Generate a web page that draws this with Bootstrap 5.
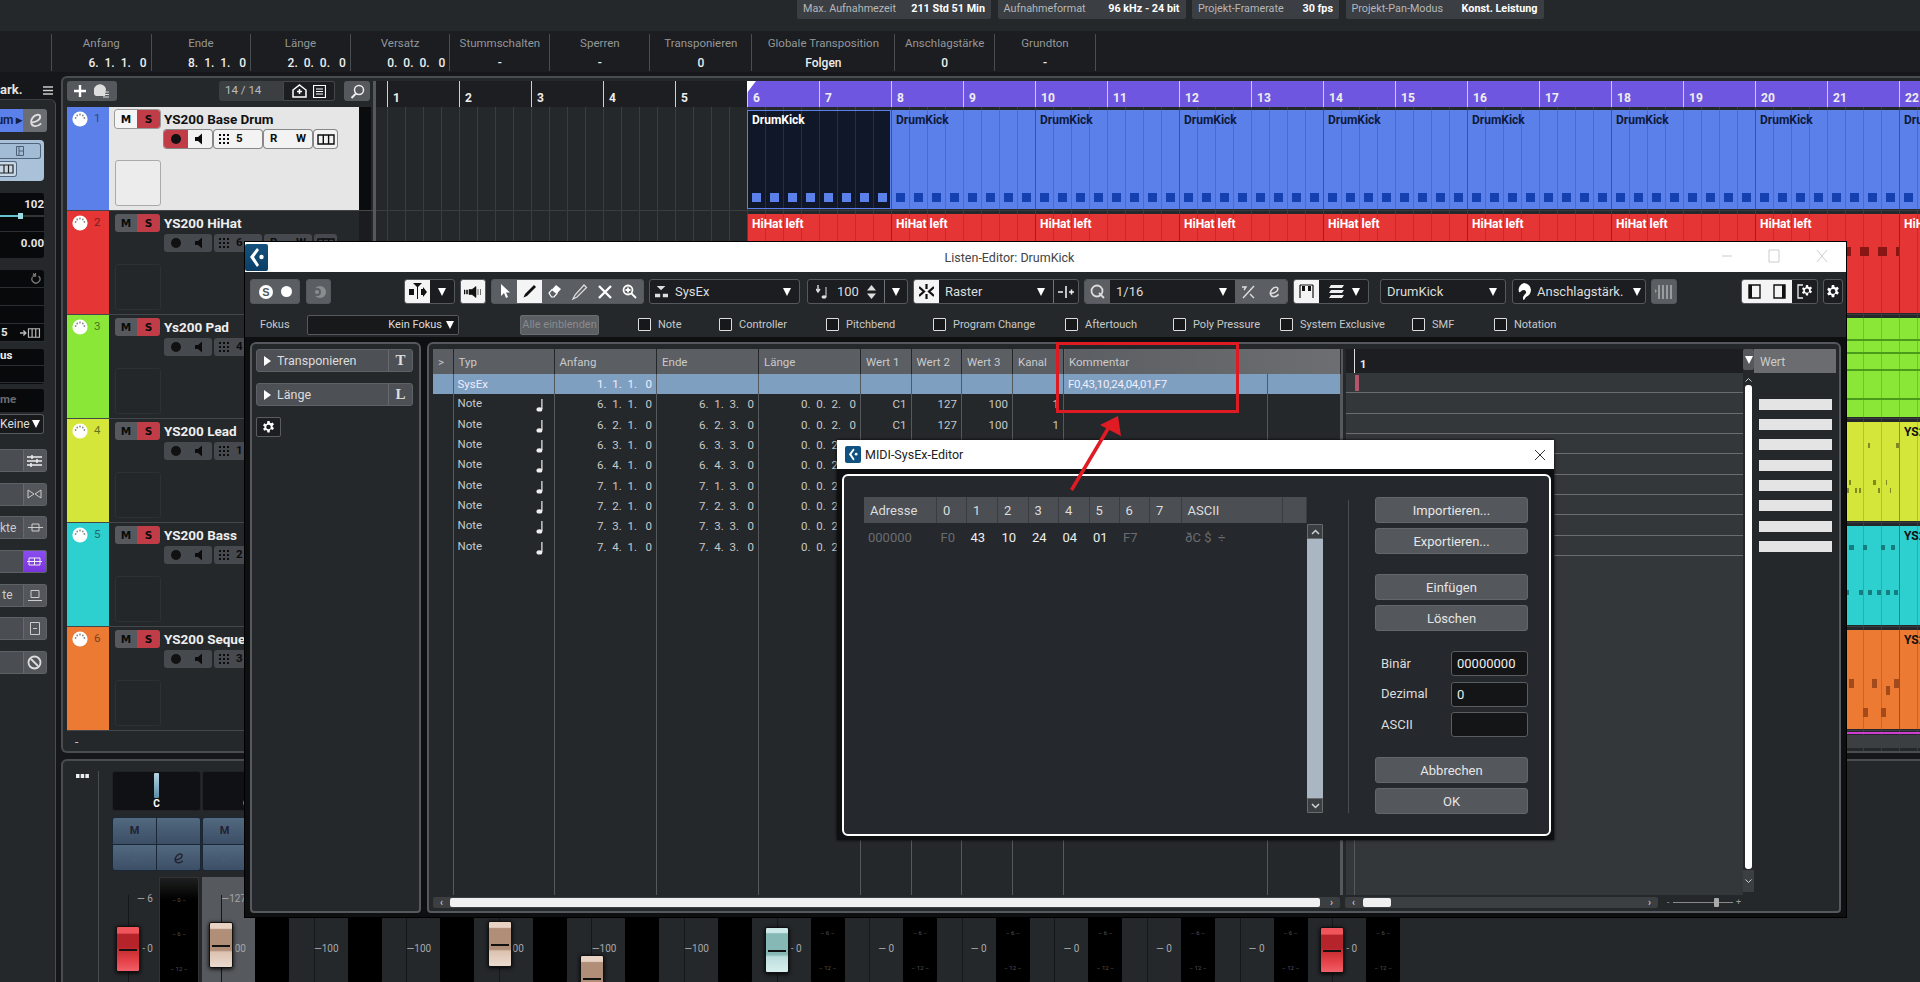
<!DOCTYPE html>
<html lang="de">
<head>
<meta charset="utf-8">
<title>Cubase Listen-Editor</title>
<link href="https://cdn.jsdelivr.net/npm/bootstrap@5.3.0/dist/css/bootstrap.min.css" rel="stylesheet">
<style>
:root{--pn:#25282b;--dk:#1b1d20;--ln:#55585c;--gr:#5b5e62;--tx:#c6c8ca}
html,body{margin:0;height:982px;overflow:hidden}
body{width:1920px;background:var(--pn);color:var(--tx);font:12px/1.2 Roboto,"Noto Sans",sans-serif;position:relative}
svg{display:block;flex:none}
.daw{width:1920px;height:982px}
.topbar{height:31px;background:#25282b;padding-left:797px;gap:6.5px}
.pill{height:19px;background:#3b3e42;border-radius:0 0 2px 2px;font-size:10.8px;color:#b5b7ba;padding:0 6px;white-space:nowrap}
.pill b{color:#fff;font-weight:700}
.p1{width:194px}.p2{width:188px}.p3{width:147px}.p4{width:198px}
.infoline{height:41px;background:#1b1d20;padding:3px 0 0 51px}
.icell{height:37px;border-left:1px solid #4a4d50;text-align:center;font-size:11.5px;color:#94979a;padding-top:3px;white-space:nowrap}
.icell b{display:block;color:#eee;font-size:12px;margin-top:5px;font-weight:500;white-space:pre}
.icell b.tv{text-align:right;padding-right:4px}
.icell:last-child{border-right:1px solid #4a4d50}
.w99{width:99.6px}.w102{width:102px}.w143{width:143px}.w100{width:100px}
.workspace{height:910px;background:#15171a;padding-top:4px}
.insp{width:61px;flex:none}
.insp-h{height:23px;padding:6px 8px 0 0;font-weight:700;font-size:13px;color:#e4e4e4}
.insp-p{width:55.5px;height:883px;background:var(--pn);border-right:1px solid #4a4d50;border-top:1px solid #3c3f42;border-top-right-radius:6px;padding-top:9px}
.i-route{width:47px;height:23px;border-radius:0 3px 3px 0;overflow:hidden;font-size:12px;font-weight:600;color:#12213f}
.i-route>span{width:23px;background:#5b80ea;white-space:nowrap;justify-content:flex-end;padding-right:1px}
.i-route>div{width:24px;background:#6a6d71;color:#ddd}
.i-blue{width:44px;height:41px;margin-top:8px;background:#a9c1d9;border-radius:0 4px 4px 0;padding-top:3px}
.i-bb{height:16px;width:41px;border:1px solid #51667c;border-left:0;border-radius:0 3px 3px 0;background:#a3bcd5}
.i-bb2{width:17px;margin-top:2px;background:#c9d8e6}
.i-blk{width:44px;background:#08090a;border-radius:0 3px 3px 0;font-weight:700;color:#e6e6e6;font-size:11.5px;text-align:right}
.b1{height:65px;margin-top:12px}.b1 i{display:block;height:1px;background:#2c2e31;margin-top:14px}
.b1 p{margin:0;padding-top:4px;line-height:14px}
.sl{height:2px;background:#333;margin-top:4px;position:relative}.sl::before{content:"";display:block;width:21px;height:2px;background:#65c3d0}
.sl::after{content:"";position:absolute;left:18px;top:-2px;width:5px;height:6px;background:#9fdce6}
.b2{height:72px;margin-top:12px}.b2>div{height:18px;border-bottom:1px solid #2c2e31;padding:0 3px}
.k5{width:17px;margin-right:3px;text-align:left;padding-left:1px}
.b3{height:35px;margin-top:7px}.b3>div{height:17px;border-bottom:1px solid #2c2e31;padding-right:32px;color:#eee}
.b4{height:23px;margin-top:5px;color:#6a6d70;padding:4px 28px 0 0;white-space:nowrap}
.keine{width:44px;height:20px;margin-top:2px;border:1px solid #55585c;border-left:0;border-radius:0 3px 3px 0;color:#ddd;font-size:12px;padding-right:3px;background:#17191b;white-space:nowrap}
.i-rows{margin-top:15px;gap:10.7px}
.i-row{width:47px;height:23px;background:#4a4d51;border:1px solid #5e6165;border-left:0;border-radius:0 3px 3px 0;color:#ccc;font-size:12px}
.i-row>span{width:23px;text-align:right;white-space:nowrap;padding-right:10px}
.i-row>div{width:24px;height:100%;border-left:1px solid #66696d;background:#53565a}
.i-row>div.pur{background:linear-gradient(#8a4df0,#7a35dc)}
.maincol{width:1859px;flex:none}
.proj{height:677px;background:var(--pn);border:2px solid #4a4d50;border-right:0;border-radius:6px 0 0 6px;padding:3px 0 0 4px}
.tcol{width:306px;flex:none}
.tt{height:26px;padding-bottom:6px}
.tg{height:20px;background:#55585c;border-radius:3px}
.tg1{width:50px}.tg2{width:116px;margin-left:102px;background:#3c3f42;color:#bbb;padding-left:6px;font-size:11.5px}
.tg2 .ico{background:#1c1e21;width:52px;margin-left:auto;height:100%;border:1px solid #44474a;border-radius:0 3px 3px 0;gap:6px}
.tg3{width:26px;margin-left:9px}
.trk{height:104px;border-bottom:1px solid #44474a}
.strip{width:42px;flex:none;padding:4px 0 0 5px;gap:6px}
.no{font-size:11.5px;line-height:15px;opacity:.55;color:#111}
.c1{background:#5b80ea}.c2{background:#e63535}.c3{background:#8ae637}.c4{background:#d4e63a}.c5{background:#2ecfcf}.c6{background:#ec7a33}
.tbody{width:250px;flex:none;padding:3px 0 0 6px}
.sel .tbody{background:#e6e6e6}
.rail{width:12px;background:#1a1c1f}.sel .rail{background:#0b0c0d}
.ms{width:45px;height:18px;border-radius:3px;overflow:hidden;flex:none;font-weight:700;font-size:10.5px;color:#0c0c0c;font-family:"DejaVu Sans",sans-serif;text-align:center;line-height:18px}
.ms span{width:22px}.ms .m{background:#56595d}.ms .s{width:23px;background:#c03c47}
.sel .ms{box-shadow:0 0 0 1px #9a9a9a}.sel .ms .m{background:#f5f5f5}
.tname{font-weight:700;font-size:13.5px;color:#eee;margin-left:4px;white-space:nowrap}
.sel .tname{color:#111}
.r2{margin:2px 0 0 49px;gap:2px;height:18px}
.r2>div{height:18px;background:#46494d;border-radius:3px;color:#0c0c0c;font-weight:700;font-size:11.5px}
.sel .r2>div{background:#f3f3f3;box-shadow:0 0 0 1px #888}
.r-a{width:48px;overflow:hidden}.r-a span{width:24px;height:100%}
.sel .r-a span:first-child{background:#c03c47}
.r-b{width:48px;padding:0 5px;gap:6px}.r-c{width:48px;padding:0 6px;justify-content:space-between}.r-d{width:23px}
.thumb{width:46px;height:46px;margin-top:12px;border:1px solid #2e3134;border-radius:3px;background:#24272a}
.sel .thumb{background:#ececec;border-color:#aaa}
.split{width:3px;flex:none;background:#55585c}
.arr{width:1545px;flex:none;overflow:hidden;background:repeating-linear-gradient(90deg,#3a3d40 0 1px,transparent 1px 18px) 11px 0 #25282b}
.ruler{height:26px;background:#1c1e21;padding-left:11px}
.bar{width:72px;flex:none;border-left:1px solid #cfcfcf;color:#eee;font-weight:700;font-size:12px;padding:10px 0 0 5px;height:26px}
.bar.pu{background:#6f56e0;position:relative}
.flag{position:absolute;left:-1px;top:0;width:0;height:0;border-top:12px solid #fff;border-right:9px solid transparent}
.lane{height:104px;padding:3px 0 2px 371px;border-bottom:1px solid #3a3d40}
.ev{height:99px;width:144px;flex:none;font-weight:700;font-size:12px;padding:3px 4px;border-left:1px solid rgba(0,0,0,.35);white-space:nowrap;overflow:hidden;position:relative;background-image:repeating-linear-gradient(90deg,transparent 0 17px,rgba(0,0,0,.16) 17px 18px)}
.e1{color:#0d1a3a;background-color:#5b80ea}
.e1s{color:#fff;background-color:#0f1729;outline:1px solid #5b80ea;outline-offset:-1px;background-image:repeating-linear-gradient(90deg,transparent 0 17px,rgba(255,255,255,.1) 17px 18px)}
.e2{color:#fff;background-color:#e63535}
.e3{color:#111;background-color:#8ae637;width:1174px}
.e4{color:#111;background-color:#d4e63a;width:1152px}.e4b{color:#111;background-color:#d4e63a;width:144px}
.e5{color:#111;background-color:#2ecfcf;width:1152px}.e5b{color:#111;background-color:#2ecfcf;width:144px}
.e6{color:#111;background-color:#ec7a33;width:1152px}.e6b{color:#111;background-color:#ec7a33;width:144px}
.nts{position:absolute;left:0;right:0;top:83px;height:9px;background:repeating-linear-gradient(90deg,transparent 0 4px,#1540b0 4px 13px,transparent 13px 18px)}
.e1s .nts{background:repeating-linear-gradient(90deg,transparent 0 4px,#5b80ea 4px 13px,transparent 13px 18px)}
.redn{position:absolute;right:0;width:75px;top:33px;height:9px;background:repeating-linear-gradient(90deg,#8a1515 0 9px,transparent 9px 18px)}
.evsvg{position:absolute;right:0;top:0}
.lane-end{padding-left:371px}
.mag{height:2px;background:#d03ccf;margin-top:1px}
.gr13{height:13px;margin-top:1px;background:#3c3f42}
.mix{height:223px;margin-top:6px;background:var(--pn);border:2px solid #4a4d50;border-width:2px 0 0 2px;border-top-left-radius:6px}
.mrail{width:36px;flex:none;border-right:1px solid #4a4d50;margin-top:10px;padding-top:3px;padding-left:13px;color:#eee}
.mspace{width:13px;flex:none}
.ch{width:92.6px;flex:none}
.c-first{width:90px}
.top{height:116px;padding-top:10px}
.pan{height:40px;width:89px;background:#101114;border-radius:3px;border:1px solid #222;color:#fff;font-weight:700;font-size:10px;text-align:center;padding-top:1px}
.pan i{display:block;width:5px;height:25px;margin:0 auto 0;background:linear-gradient(#b8d4e4,#5b8ba6);border-radius:1px}
.mle{width:89px;height:54px;margin-top:6px;border-radius:3px;overflow:hidden;border:1px solid #1c2734;display:grid;grid-template-columns:1fr 1fr;gap:1px;background:#1c2734;color:#223;font-weight:700;font-size:11px;text-align:center;line-height:26px}
.mle div{background:linear-gradient(#526980,#3b4e65)}
.mle .dim{color:#4a5c72}
.low{height:105px}
.fz{width:53px;flex:none;position:relative;background:linear-gradient(#15171a,#15171a) no-repeat 19px 18px/1px 100%;font-size:10px;color:#a5a7aa;text-align:right;padding-right:9px}
.c-first .fz{width:47px;background-position:16px 18px;padding-right:6px}
.fz-lt{background-color:#56595d}
.fz span{display:block;line-height:12px}
.l1{margin-top:16px}.l2{margin-top:38px}.l3{margin-top:66px}
.mt{width:34px;flex:none;background:#000;font-size:6px;color:#555;text-align:center;border-radius:1px;white-space:pre}
.c-first .mt{width:40px;margin-right:3px;background:linear-gradient(#1e1f20,#000 22px);border:1px solid #333;border-bottom:0}
.mt span{display:block;line-height:8px}
.mt .k1{margin-top:52px}.mt .k2{margin-top:27px}
.c-first .mt .k0{margin-top:18px;margin-bottom:-26px}
.fader{position:absolute;width:24px;height:46px;border-radius:2px;box-shadow:0 1px 4px #000;border:1px solid #111}
.fader::after{content:"";position:absolute;left:2px;right:2px;top:50%;height:2px;background:#111}
.f-r{background:linear-gradient(#f0555c 0 14%,#b5242a 16% 46%,#c42c30 50%,#e8454c 80%,#f0606a)}
.f-b{background:linear-gradient(#e8d2c4 0 12%,#b08e78 15% 62%,#dcc2b0 66%,#eadbd0)}
.f-t{background:linear-gradient(#cdeae8 0 10%,#86b8b6 13% 60%,#bcdedd 66%,#d8efee)}
.fa1{left:4px;top:49px}.fa2{left:7px;top:45px}.fa3{left:8px;top:44px}.fa4{left:8px;top:78px}.fa5{left:7px;top:50px}
.win{position:absolute;left:245px;top:242px;width:1601px;height:675px;background:var(--pn);box-shadow:0 0 0 1px #000}
.wt{height:30px;background:#fff;color:#444;font-size:12.5px;position:relative;padding-right:72px}
.wic{position:absolute;left:0;top:2px;width:23px;height:27px;background:linear-gradient(#13527e,#0b3f66);border-radius:2px}
.wbtn{position:absolute;top:7px;color:#bbb}
.wb-min{left:1476px}.wb-max{left:1523px}.wb-cls{left:1571px}
.tb{height:25px;margin-top:7px;padding-left:5px}
.sg{height:25px;border:1px solid #55585c;border-radius:3px;overflow:hidden;background:#1b1d20;color:#ddd;font-size:13px;flex:none}
.sg>div{height:100%}
.cw{background:#f4f4f4}.cg{background:#5b5e62}
.sg.gy{background:#5b5e62}
.w20{width:20px}.w25{width:25px}.w26{width:26px}.w50{width:50px}.w51{width:51px}.w52{width:52px}.w153{width:153px}.w151{width:151px}.w101{width:101px}.w166{width:166px}.w204{width:204px}.w76{width:76px}.w126{width:126px}.w134{width:134px}.w77{width:77px}
.m5{margin-left:5px}.m6{margin-left:6px}.m7{margin-left:7px}.m11{margin-left:11px}.m64{margin-left:64px}.m73{margin-left:73px}
.cell{width:25px;flex:none}
.lbl{padding-left:6px;white-space:nowrap}
.sy-i{margin-left:5px}.sy-t{margin-left:7px}
.tri{width:0;height:0;border-left:4.5px solid transparent;border-right:4.5px solid transparent;border-top:8px solid #fff;flex:none}
.fokrow{height:23px;margin-top:9px;padding-left:15px;font-size:11px}
.fok{width:47px;flex:none}
.fdd{width:152px;height:20px;border:1px solid #55585c;border-radius:2px;background:#17191b;padding-right:4px;gap:4px;color:#ddd}
.alle{width:79px;height:20px;margin-left:61px;background:#5b5e62;border:1px solid #6a6d70;border-radius:2px;color:#888b8e;padding:0;font-size:11px;line-height:1}
.cks{display:grid;grid-template-columns:81px 107px 107px 132px 108px 107px 132px 82px auto;margin-left:39px}
.form-check-input.ck{width:13px;height:13px;margin:0 7px 0 0;border:1px solid #dcdcdc;border-radius:1px;background-color:#16181a;flex:none}
.blk{height:5px;background:#0e0f11;margin-top:1px}
.wbody{height:575px;background:#0e0f11;padding:0 5px;gap:6px}
.pnl{background:var(--pn);border:2px solid #55585c;border-radius:6px 6px 4px 4px;height:571px}
.left{width:171px;padding:5px 6px 0 4px}
.xp{height:23px;background:#4d5054;border:1px solid #5e6165;border-radius:3px;color:#ddd;font-size:12.5px;margin-bottom:11px;padding-left:7px;gap:6px}
.xp .tr{width:0;height:0;border-top:5px solid transparent;border-bottom:5px solid transparent;border-left:7px solid #fff}
.xp em{margin-left:auto;width:24px;height:100%;border-left:1px solid #66696d;font:700 15px "Liberation Serif",serif;text-align:center;line-height:21px;color:#ddd}
.gbtn{width:25px;height:20px;background:#1c1e21;border:1px solid #5a5d60;border-radius:2px}
.main{width:1414px;padding:5px 4px 0 4px}
.up{height:546px}
.evw{width:907px;flex:none;height:546px}
table.evt{width:907px;height:546px;table-layout:fixed;border-collapse:collapse;margin:0;--bs-table-bg:transparent;--bs-table-color:var(--tx);font-size:11.5px}
.evt col:nth-child(1){width:20px}.evt col:nth-child(2){width:101px}.evt col:nth-child(3){width:102.5px}.evt col:nth-child(4),.evt col:nth-child(5){width:102px}.evt col:nth-child(6),.evt col:nth-child(7){width:50.5px}.evt col:nth-child(8),.evt col:nth-child(9){width:51px}.evt col:nth-child(10){width:204px}.evt col:nth-child(11){width:73px}
table.evt>:not(caption)>*>*{padding:2px 4px 0;border:0;border-right:1px solid #55585c;background:transparent;color:var(--tx);height:20px;vertical-align:middle;white-space:pre;line-height:1}
table.evt>thead>tr>th{height:25px;background:#5b5e62;border-right:1px solid #25282b;font-weight:400;color:#c9cbcd;font-size:11.5px;padding:2px 5px 0}
table.evt>thead>tr>th.kom{background:linear-gradient(90deg,#5b5e62,#6c6e71)}
table.evt>tbody>tr.s>td{background:#7f9fc0;color:#eef;height:20px}
table.evt>tbody>tr:nth-child(3n)>td{height:21px}
table.evt td.r{text-align:right}
table.evt td.kt{letter-spacing:-.25px}
table.evt>tbody>tr.fill>td{height:338px}
.nt{display:inline-block;vertical-align:-2px;float:right;margin-right:6px}
.divi{width:6px;flex:none;background:linear-gradient(90deg,transparent 1px,#55585c 1px 3px,transparent 3px)}
.nd{width:397px;flex:none;background:#34373a}
.nd-r{height:24px;background:#1c1e21;padding-left:8px}
.nd-r b{display:block;border-left:1px solid #ddd;padding:9px 0 0 5px;height:24px;color:#eee;font-size:11px;line-height:1.2}
.nd-b{height:522px;position:relative;background:repeating-linear-gradient(#34373a 0 19.33px,#6a6d70 19.33px 20.33px) 0 0/100% 184px no-repeat,linear-gradient(#54575b,#54575b) no-repeat 8px 0/1px 100% #34373a}
.pink{position:absolute;left:9px;top:2px;width:4px;height:16px;background:#b3566b}
.vs{width:11px;flex:none;height:546px;background:#25282b}
.vs .tg4{height:21px;background:#55585c;border-radius:2px;margin-bottom:4px}
.vs .ar{height:10px;color:#bbb}
.vs .th{width:7px;margin:1px auto 0;height:484px;background:#fff;border-radius:3px}
.vs .bt{height:22px;background:#3c3f42;margin-top:1px}
.wert{width:82px;flex:none}
.wert .hd{height:24px;background:#6a6c6f;color:#ccc;padding:6px 6px 0}
.wb{height:11px;width:73px;margin:9.33px 0 0 5px;background:#e4e4e4}
.hd+.wb{margin-top:25.7px}
.bots{height:11px;margin-top:2px}
.hs{height:11px;background:#3c3f42;border-radius:2px;color:#ddd}
.hs1{width:907px}.hs2{width:313px;margin-left:5px}
.hs i{display:block;height:9px;background:#f0f0f0;border-radius:2px}
.hs1 i{width:870px;margin-left:17px}
.hs2 i{width:28px;margin-left:18px}
.hs u{width:9px;text-align:center;text-decoration:none;font-size:10px;line-height:11px}
.zm{width:74px;margin-left:9px;color:#999;font-size:9px;gap:3px;line-height:11px}
.zm hr{flex:3;margin:0;border:0;height:1px;background:#888;opacity:1}
.zm hr+em+hr{flex:1}
.zm em{width:5px;height:9px;margin-top:1px;background:#aaa;border-radius:1px;margin-left:-3px;margin-right:-3px;flex:none}
.rbox{position:absolute;left:1056px;top:342px;width:183px;height:71px;border:3px solid #de1a22}
.sx{position:absolute;left:837px;top:440px;width:717px;height:400px;background:#0e0f11;box-shadow:0 0 3px #000}
.sxt{height:29px;background:#fff;color:#222;font-size:12.5px;padding-left:28px;position:relative}
.sxic{position:absolute;left:8px;top:6px;width:16px;height:17px;background:#0f5281;border-radius:2px}
.sxb{margin:5px 3px 0 5px;height:362px;background:#25282c;border:2px solid #fff;border-radius:6px;padding:21px 0 0 20px}
table.sxtb{width:443px;table-layout:fixed;border-collapse:collapse;margin:0;font-size:13px;--bs-table-bg:transparent}
.sxtb col:nth-child(1){width:72.5px}.sxtb col:nth-child(2){width:30px}.sxtb col:nth-child(3){width:31px}.sxtb col:nth-child(4),.sxtb col:nth-child(5),.sxtb col:nth-child(6){width:30.5px}.sxtb col:nth-child(7){width:30px}.sxtb col:nth-child(8){width:30.5px}.sxtb col:nth-child(9){width:31.5px}.sxtb col:nth-child(10){width:101.5px}.sxtb col:nth-child(11){width:24px}
table.sxtb>:not(caption)>*>*{padding:0 0 0 6px;border:0;background:transparent;color:#eee;height:28px;vertical-align:middle;line-height:1}
table.sxtb>thead>tr>th{height:26px;background:#4b4e52;border-right:1px solid #3a3d40;font-weight:400;color:#ddd;font-size:13px}
table.sxtb td.d{color:#6a6d70}
table.sxtb td.c{padding-left:4px}
.sbar{width:16px;flex:none;height:289px;margin-top:27px;background:#aab6c2;border-radius:2px;overflow:hidden}
.sbar div{height:15px;background:#3c3f42;border:1px solid #6a6d70;color:#cfd3d6}
.sep{width:1px;height:313px;background:#4a4d50;margin:3px 26px 0 25px;flex:none}
.sxr{width:153px;flex:none}
.btn.sb{width:100%;height:26px;padding:0;background:#54575b;border:1px solid #63666a;border-radius:3px;color:#e6e6e6;font-size:13px;line-height:1;display:block;margin-bottom:5px;box-shadow:none}
.btn.sp21{margin-bottom:20px}
.fr{height:25px;margin-bottom:5.7px;font-size:13px;color:#ddd;padding-left:6px}
.fr.fr-last{margin-bottom:20px}
.fr .form-control{margin-left:auto;width:77px;height:25px;padding:0 5px;background:#141517;border:1px solid #5a5d60;border-radius:3px;color:#eee;font:13px Roboto,sans-serif;min-height:0}
.arrow{position:absolute;left:1060px;top:410px}
</style>
</head>
<body>
<svg width="0" height="0" class="position-absolute">
<defs>
<symbol id="midi" viewBox="0 0 16 16"><circle cx="8" cy="8" r="7.6" fill="#fff"/><g fill="#8a8d90"><circle cx="3.6" cy="7" r=".9"/><circle cx="5.2" cy="4.5" r=".9"/><circle cx="8" cy="3.5" r=".9"/><circle cx="10.8" cy="4.5" r=".9"/><circle cx="12.4" cy="7" r=".9"/></g></symbol>
<symbol id="nt" viewBox="0 0 8 14"><ellipse cx="3.4" cy="11.4" rx="2.9" ry="2.2" fill="#eee"/><rect x="5.3" y="1" width="1.2" height="10" fill="#eee"/></symbol>
<symbol id="spk" viewBox="0 0 12 12"><path d="M1 4h3l4-3.5v11L4 8H1z" fill="currentColor"/></symbol>
<symbol id="gd" viewBox="0 0 11 11"><g fill="currentColor"><rect x="0" y="0" width="2" height="2"/><rect x="4" y="0" width="2" height="2"/><rect x="8" y="0" width="2" height="2"/><rect x="0" y="4" width="2" height="2"/><rect x="4" y="4" width="2" height="2"/><rect x="8" y="4" width="2" height="2"/><rect x="0" y="8" width="2" height="2"/><rect x="4" y="8" width="2" height="2"/><rect x="8" y="8" width="2" height="2"/></g></symbol>
<symbol id="kb" viewBox="0 0 18 11"><path d="M1 1h16v9H1zM6.300 1v9M11.600 1v9" fill="none" stroke="currentColor" stroke-width="1.400"/></symbol>
<symbol id="gear" viewBox="0 0 16 16"><path fill="#fff" fill-rule="evenodd" d="M6.600 0h2.800l.4 2.200 1.400.7 2-1 1.500 2.500-1.700 1.400v1.400l1.700 1.400-1.500 2.500-2-1-1.400.7L9.400 14H6.600l-.4-2.200-1.400-.7-2 1L1.300 9.600 3 8.200V6.800L1.300 5.400l1.500-2.500 2 1 1.400-.7zM8 4.700A2.800 2.800 0 1 0 8 10.300 2.800 2.800 0 0 0 8 4.700z"/></symbol>
<symbol id="cube" viewBox="0 0 23 27"><path d="M12 4 5 13l7 10 2-2-5-8 5-7z" fill="#fff"/><circle cx="16.500" cy="13" r="2.200" fill="#fff"/></symbol>
<symbol id="e" viewBox="0 0 18 18"><path d="M4 11c4 0 10-2 10-6 0-3-5-3-8 1-3 4-2 9 3 9 2 0 4-1 6-3" fill="none" stroke="currentColor" stroke-width="2"/></symbol>
</defs>
</svg>

<div class="daw d-flex flex-column">
  <header class="topbar d-flex">
    <div class="pill p1 d-flex justify-content-between align-items-center"><span>Max. Aufnahmezeit</span><b>211 Std 51 Min</b></div>
    <div class="pill p2 d-flex justify-content-between align-items-center"><span>Aufnahmeformat</span><b>96 kHz - 24 bit</b></div>
    <div class="pill p3 d-flex justify-content-between align-items-center"><span>Projekt-Framerate</span><b>30 fps</b></div>
    <div class="pill p4 d-flex justify-content-between align-items-center"><span>Projekt-Pan-Modus</span><b>Konst. Leistung</b></div>
  </header>
  <div class="infoline d-flex">
    <div class="icell w99">Anfang<b class="tv">6.  1.  1.   0</b></div>
    <div class="icell w99">Ende<b class="tv">8.  1.  1.   0</b></div>
    <div class="icell w99">Länge<b class="tv">2.  0.  0.   0</b></div>
    <div class="icell w99">Versatz<b class="tv">0.  0.  0.   0</b></div>
    <div class="icell w100">Stummschalten<b>-</b></div>
    <div class="icell w100">Sperren<b>-</b></div>
    <div class="icell w102">Transponieren<b>0</b></div>
    <div class="icell w143">Globale Transposition<b>Folgen</b></div>
    <div class="icell w99">Anschlagstärke<b>0</b></div>
    <div class="icell w102">Grundton<b>-</b></div>
  </div>
  <div class="workspace d-flex">
    <aside class="insp">
      <div class="insp-h d-flex justify-content-between"><span>ark.</span><svg width="10" height="9" class="mt-1"><path d="M0 1h10M0 4.500h10M0 8h10" stroke="#ccc" stroke-width="1.500"/></svg></div>
      <div class="insp-p">
        <div class="i-route d-flex"><span class="d-flex align-items-center">um&thinsp;▸</span><div class="d-flex align-items-center justify-content-center"><svg width="17" height="17"><use href="#e"/></svg></div></div>
        <div class="i-blue">
          <div class="i-bb d-flex align-items-center justify-content-end pe-3"><svg width="8" height="10"><path d="M.5.5h7v9h-7zM3 .5v9M3 5h4.500" fill="none" stroke="#4c6076"/></svg></div>
          <div class="i-bb i-bb2 d-flex align-items-center"><svg width="14" height="10"><path d="M0 1h13v8H0M4 1v8M8.500 1v8" fill="none" stroke="#222" stroke-width="1.200"/></svg></div>
        </div>
        <div class="i-blk b1"><p>102</p><div class="sl"></div><i></i><p>0.00</p></div>
        <div class="i-blk b2">
          <div class="d-flex justify-content-end align-items-center"><svg width="11" height="13"><path d="M8.500 4a4 4 0 1 1-6 1M3 1.500l2.500 2.500M5.500 1v3h-3" fill="none" stroke="#777" stroke-width="1.300"/></svg></div>
          <div></div><div></div>
          <div class="d-flex align-items-center p-0"><span class="k5">5</span><svg width="22" height="12" viewBox="0 0 26 12"><path d="M0 6h6M4 3l3 3-3 3" fill="none" stroke="#bbb" stroke-width="1.500"/><path d="M10 1h13v10H10zM14.300 1v10M18.600 1v10" fill="none" stroke="#bbb" stroke-width="1.400"/></svg></div>
        </div>
        <div class="i-blk b3"><div>us</div><div></div></div>
        <div class="i-blk b4">me</div>
        <div class="keine d-flex align-items-center justify-content-between">Keine<span class="tri"></span></div>
        <div class="i-rows d-flex flex-column">
          <div class="i-row d-flex align-items-center"><span></span><div class="d-flex align-items-center justify-content-center"><svg width="15" height="12"><path d="M0 2h15M0 6h15M0 10h15M5 0v4M10 4v4M4 8v4" stroke="#eee" stroke-width="1.500"/></svg></div></div>
          <div class="i-row d-flex align-items-center"><span></span><div class="d-flex align-items-center justify-content-center"><svg width="15" height="10"><path d="M1 1l6 4-6 4zM14 1L8 5l6 4z" fill="none" stroke="#ccc"/></svg></div></div>
          <div class="i-row d-flex align-items-center"><span>kte</span><div class="d-flex align-items-center justify-content-center"><svg width="15" height="9"><path d="M4 1h7v7H4zM0 4.500h15" fill="none" stroke="#ccc"/></svg></div></div>
          <div class="i-row d-flex align-items-center"><span></span><div class="pur d-flex align-items-center justify-content-center"><svg width="15" height="9"><path d="M2 1h11v7H2zM0 4.500h15M7.500 1v7" fill="none" stroke="#eee"/></svg></div></div>
          <div class="i-row d-flex align-items-center"><span>te</span><div class="d-flex align-items-center justify-content-center"><svg width="14" height="11"><path d="M3 .5h8v7H3zM0 10.500h14" fill="none" stroke="#ccc"/></svg></div></div>
          <div class="i-row d-flex align-items-center"><span></span><div class="d-flex align-items-center justify-content-center"><svg width="10" height="13"><path d="M.5.5h9v12h-9zM3 6.500h4" fill="none" stroke="#ccc"/></svg></div></div>
          <div class="i-row d-flex align-items-center"><span></span><div class="d-flex align-items-center justify-content-center"><svg width="15" height="15"><circle cx="7.500" cy="7.500" r="6" fill="none" stroke="#ddd" stroke-width="1.800"/><path d="M4 4l7 7" stroke="#ddd" stroke-width="1.800"/></svg></div></div>
        </div>
      </div>
    </aside>
    <div class="maincol">
      <section class="proj d-flex">
        <div class="tcol">
          <div class="tt d-flex">
            <div class="tg tg1 d-flex align-items-center justify-content-center gap-2"><svg width="12" height="12"><path d="M6 0v12M0 6h12" stroke="#fff" stroke-width="2.400"/></svg><svg width="16" height="14"><path d="M0 8a6 6 0 0 1 12-3l-1 7H3a3 3 0 0 1-3-4z" fill="#ddd"/><path d="M9 8h6M9 10.500h6M9 13h6" stroke="#ddd"/></svg></div>
            <div class="tg tg2 d-flex align-items-center"><span>14 / 14</span><div class="ico d-flex align-items-center justify-content-center"><svg width="15" height="14"><path d="M7.500 1 14 6v7H1V6z" fill="none" stroke="#fff" stroke-width="1.500"/><path d="M7.500 5v5M5 7.500h5" stroke="#fff" stroke-width="1.500"/></svg><svg width="13" height="13"><path d="M.5.500h12v12H.5zM3 4h7M3 6.500h7M3 9h7" fill="none" stroke="#fff" stroke-width="1.200"/></svg></div></div>
            <div class="tg tg3 d-flex align-items-center justify-content-center"><svg width="15" height="15"><circle cx="9" cy="6" r="4.500" fill="none" stroke="#eee" stroke-width="1.500"/><path d="M6 9.500 1.500 14" stroke="#eee" stroke-width="2"/></svg></div>
          </div>
          <div class="trk sel d-flex"><div class="strip c1 d-flex"><svg width="16" height="16"><use href="#midi"/></svg><span class="no">1</span></div><div class="tbody"><div class="d-flex align-items-center"><div class="ms d-flex"><span class="m">M</span><span class="s">S</span></div><span class="tname">YS200 Base Drum</span></div><div class="r2 d-flex"><div class="r-a d-flex"><span class="d-flex align-items-center justify-content-center"><svg width="10" height="10"><circle cx="5" cy="5" r="5" fill="#111"/></svg></span><span class="d-flex align-items-center justify-content-center"><svg width="12" height="12"><use href="#spk"/></svg></span></div><div class="r-b d-flex align-items-center"><svg width="11" height="11"><use href="#gd"/></svg><span>5</span></div><div class="r-c d-flex align-items-center"><span>R</span><span>W</span></div><div class="r-d d-flex align-items-center justify-content-center"><svg width="18" height="11"><use href="#kb"/></svg></div></div><div class="thumb"></div></div><div class="rail"></div></div>
          <div class="trk d-flex"><div class="strip c2 d-flex"><svg width="16" height="16"><use href="#midi"/></svg><span class="no">2</span></div><div class="tbody"><div class="d-flex align-items-center"><div class="ms d-flex"><span class="m">M</span><span class="s">S</span></div><span class="tname">YS200 HiHat</span></div><div class="r2 d-flex"><div class="r-a d-flex"><span class="d-flex align-items-center justify-content-center"><svg width="10" height="10"><circle cx="5" cy="5" r="5" fill="#111"/></svg></span><span class="d-flex align-items-center justify-content-center"><svg width="12" height="12"><use href="#spk"/></svg></span></div><div class="r-b d-flex align-items-center"><svg width="11" height="11"><use href="#gd"/></svg><span>6</span></div><div class="r-c d-flex align-items-center"><span>R</span><span>W</span></div><div class="r-d d-flex align-items-center justify-content-center"><svg width="18" height="11"><use href="#kb"/></svg></div></div><div class="thumb"></div></div><div class="rail"></div></div>
          <div class="trk d-flex"><div class="strip c3 d-flex"><svg width="16" height="16"><use href="#midi"/></svg><span class="no">3</span></div><div class="tbody"><div class="d-flex align-items-center"><div class="ms d-flex"><span class="m">M</span><span class="s">S</span></div><span class="tname">Ys200 Pad</span></div><div class="r2 d-flex"><div class="r-a d-flex"><span class="d-flex align-items-center justify-content-center"><svg width="10" height="10"><circle cx="5" cy="5" r="5" fill="#111"/></svg></span><span class="d-flex align-items-center justify-content-center"><svg width="12" height="12"><use href="#spk"/></svg></span></div><div class="r-b d-flex align-items-center"><svg width="11" height="11"><use href="#gd"/></svg><span>4</span></div></div><div class="thumb"></div></div><div class="rail"></div></div>
          <div class="trk d-flex"><div class="strip c4 d-flex"><svg width="16" height="16"><use href="#midi"/></svg><span class="no">4</span></div><div class="tbody"><div class="d-flex align-items-center"><div class="ms d-flex"><span class="m">M</span><span class="s">S</span></div><span class="tname">YS200 Lead</span></div><div class="r2 d-flex"><div class="r-a d-flex"><span class="d-flex align-items-center justify-content-center"><svg width="10" height="10"><circle cx="5" cy="5" r="5" fill="#111"/></svg></span><span class="d-flex align-items-center justify-content-center"><svg width="12" height="12"><use href="#spk"/></svg></span></div><div class="r-b d-flex align-items-center"><svg width="11" height="11"><use href="#gd"/></svg><span>1</span></div></div><div class="thumb"></div></div><div class="rail"></div></div>
          <div class="trk d-flex"><div class="strip c5 d-flex"><svg width="16" height="16"><use href="#midi"/></svg><span class="no">5</span></div><div class="tbody"><div class="d-flex align-items-center"><div class="ms d-flex"><span class="m">M</span><span class="s">S</span></div><span class="tname">YS200 Bass</span></div><div class="r2 d-flex"><div class="r-a d-flex"><span class="d-flex align-items-center justify-content-center"><svg width="10" height="10"><circle cx="5" cy="5" r="5" fill="#111"/></svg></span><span class="d-flex align-items-center justify-content-center"><svg width="12" height="12"><use href="#spk"/></svg></span></div><div class="r-b d-flex align-items-center"><svg width="11" height="11"><use href="#gd"/></svg><span>2</span></div></div><div class="thumb"></div></div><div class="rail"></div></div>
          <div class="trk d-flex"><div class="strip c6 d-flex"><svg width="16" height="16"><use href="#midi"/></svg><span class="no">6</span></div><div class="tbody"><div class="d-flex align-items-center"><div class="ms d-flex"><span class="m">M</span><span class="s">S</span></div><span class="tname">YS200 Sequencer</span></div><div class="r2 d-flex"><div class="r-a d-flex"><span class="d-flex align-items-center justify-content-center"><svg width="10" height="10"><circle cx="5" cy="5" r="5" fill="#111"/></svg></span><span class="d-flex align-items-center justify-content-center"><svg width="12" height="12"><use href="#spk"/></svg></span></div><div class="r-b d-flex align-items-center"><svg width="11" height="11"><use href="#gd"/></svg><span>3</span></div></div><div class="thumb"></div></div><div class="rail"></div></div>
          <div class="ps-2 pt-1">-</div>
        </div>
        <div class="split"></div>
        <div class="arr">
          <div class="ruler d-flex">
            <div class="bar">1</div><div class="bar">2</div><div class="bar">3</div><div class="bar">4</div><div class="bar">5</div>
            <div class="bar pu"><span class="flag"></span>6</div><div class="bar pu">7</div><div class="bar pu">8</div><div class="bar pu">9</div><div class="bar pu">10</div><div class="bar pu">11</div><div class="bar pu">12</div><div class="bar pu">13</div><div class="bar pu">14</div><div class="bar pu">15</div><div class="bar pu">16</div><div class="bar pu">17</div><div class="bar pu">18</div><div class="bar pu">19</div><div class="bar pu">20</div><div class="bar pu">21</div><div class="bar pu">22</div>
          </div>
          <div class="lane d-flex">
            <div class="ev e1s">DrumKick<span class="nts"></span></div><div class="ev e1">DrumKick<span class="nts"></span></div><div class="ev e1">DrumKick<span class="nts"></span></div><div class="ev e1">DrumKick<span class="nts"></span></div><div class="ev e1">DrumKick<span class="nts"></span></div><div class="ev e1">DrumKick<span class="nts"></span></div><div class="ev e1">DrumKick<span class="nts"></span></div><div class="ev e1">DrumKick<span class="nts"></span></div><div class="ev e1">DrumKick<span class="nts"></span></div>
          </div>
          <div class="lane d-flex">
            <div class="ev e2">HiHat left</div><div class="ev e2">HiHat left</div><div class="ev e2">HiHat left</div><div class="ev e2">HiHat left</div><div class="ev e2">HiHat left</div><div class="ev e2">HiHat left</div><div class="ev e2">HiHat left</div><div class="ev e2"><span class="redn"></span>HiHat left</div><div class="ev e2">HiHat left</div>
          </div>
          <div class="lane d-flex"><div class="ev e3"><svg class="evsvg" width="74" height="99"><g fill="#4a9a1c"><rect y="21" width="74" height="2"/><rect y="34" width="74" height="2"/><rect y="51" width="74" height="2"/><rect y="80" width="74" height="2"/></g></svg></div></div>
          <div class="lane d-flex"><div class="ev e4"><svg class="evsvg" width="52" height="99"><g fill="#7f8a20"><rect x="21" y="21" width="2" height="5"/><rect x="49" y="21" width="4" height="5"/><rect x="2" y="58" width="2" height="5"/><rect x="26" y="58" width="3" height="5"/><rect x="39" y="58" width="1" height="5"/><rect y="66" width="2" height="5"/><rect x="8" y="66" width="2" height="5"/><rect x="12" y="66" width="2" height="5"/><rect x="31" y="66" width="2" height="5"/><rect x="43" y="66" width="1" height="5"/></g></svg></div><div class="ev e4b">YS200 Lead<svg class="evsvg" width="22" height="99"><g fill="#7f8a20"><rect x="9" y="21" width="4" height="5"/><rect x="7" y="58" width="4" height="5"/><rect x="15" y="58" width="4" height="5"/><rect x="18" y="66" width="4" height="5"/></g></svg></div></div>
          <div class="lane d-flex"><div class="ev e5"><svg class="evsvg" width="52" height="99"><g fill="#127e80"><rect x="2" y="19" width="5" height="5"/><rect x="16" y="19" width="4" height="5"/><rect x="34" y="19" width="4" height="5"/><rect x="44" y="19" width="4" height="5"/><rect y="64" width="2" height="5"/><rect x="12" y="64" width="4" height="5"/><rect x="21" y="64" width="4" height="5"/><rect x="30" y="64" width="4" height="5"/><rect x="39" y="64" width="4" height="5"/><rect x="47" y="64" width="4" height="5"/></g></svg></div><div class="ev e5b">YS200 Bass<svg class="evsvg" width="22" height="99"><g fill="#127e80"><rect x="2" y="64" width="1" height="5"/><rect x="8" y="64" width="4" height="5"/><rect x="17" y="64" width="5" height="5"/></g></svg></div></div>
          <div class="lane d-flex"><div class="ev e6"><svg class="evsvg" width="52" height="99"><g fill="#a34a1c"><rect x="2" y="49" width="5" height="9"/><rect x="25" y="49" width="5" height="9"/><rect x="47" y="49" width="5" height="9"/><rect x="39" y="56" width="4" height="9"/><rect x="16" y="78" width="5" height="9"/><rect x="34" y="78" width="5" height="9"/></g></svg></div><div class="ev e6b">YS200 Sequencer<svg class="evsvg" width="22" height="99"><g fill="#a34a1c"><rect x="2" y="49" width="3" height="9"/><rect x="9" y="78" width="4" height="9"/></g></svg></div></div>
          <div class="lane-end"><div class="mag"></div><div class="gr13"></div></div>
        </div>
      </section>
      <section class="mix d-flex">
        <div class="mrail"><svg width="13" height="4"><path d="M0 0h3.500v4H0zM4.700 0h3.500v4H4.700zM9.400 0h3.500v4H9.400z" fill="#eee"/></svg></div>
        <div class="mspace"></div>
        <div class="ch c-first d-flex flex-column">
          <div class="top"><div class="pan"><i></i>C</div><div class="mle"><div>M</div><div></div><div class="dim">L</div><div class="d-flex align-items-center justify-content-center"><svg width="13" height="13"><use href="#e"/></svg></div></div></div>
          <div class="low d-flex"><div class="fz"><span class="l1">— 6</span><span class="l2">- 0</span><i class="fader f-r fa1"></i></div><div class="mt"><span class="k0">– 0 –</span><span class="k1">– 6 –</span><span class="k2">– 12 –</span></div></div>
        </div>
        <div class="ch d-flex flex-column">
          <div class="top"><div class="pan"><i></i>C</div><div class="mle"><div>M</div><div></div><div class="dim">L</div><div></div></div></div>
          <div class="low d-flex"><div class="fz fz-lt"><span class="l1">—127</span><span class="l2">100</span><i class="fader f-b fa2"></i></div><div class="mt"></div></div>
        </div>
        <div class="ch d-flex flex-column"><div class="top"></div><div class="low d-flex"><div class="fz"><span class="l3">—100</span></div><div class="mt"></div></div></div>
        <div class="ch d-flex flex-column"><div class="top"></div><div class="low d-flex"><div class="fz"><span class="l3">—100</span></div><div class="mt"></div></div></div>
        <div class="ch d-flex flex-column"><div class="top"></div><div class="low d-flex"><div class="fz"><span class="l3">100</span><i class="fader f-b fa3"></i></div><div class="mt"></div></div></div>
        <div class="ch d-flex flex-column"><div class="top"></div><div class="low d-flex"><div class="fz"><span class="l3">—100</span><i class="fader f-b fa4"></i></div><div class="mt"></div></div></div>
        <div class="ch d-flex flex-column"><div class="top"></div><div class="low d-flex"><div class="fz"><span class="l3">—100</span></div><div class="mt"></div></div></div>
        <div class="ch d-flex flex-column"><div class="top"></div><div class="low d-flex"><div class="fz"><span class="l3">- 0</span><i class="fader f-t fa5"></i></div><div class="mt"><span class="k1">– 6 –</span><span class="k2">– 12 –</span></div></div></div>
        <div class="ch d-flex flex-column"><div class="top"></div><div class="low d-flex"><div class="fz"><span class="l3">— 0</span></div><div class="mt"><span class="k1">– 6 –</span><span class="k2">– 12 –</span></div></div></div>
        <div class="ch d-flex flex-column"><div class="top"></div><div class="low d-flex"><div class="fz"><span class="l3">— 0</span></div><div class="mt"><span class="k1">– 6 –</span><span class="k2">– 12 –</span></div></div></div>
        <div class="ch d-flex flex-column"><div class="top"></div><div class="low d-flex"><div class="fz"><span class="l3">— 0</span></div><div class="mt"><span class="k1">– 6 –</span><span class="k2">– 12 –</span></div></div></div>
        <div class="ch d-flex flex-column"><div class="top"></div><div class="low d-flex"><div class="fz"><span class="l3">— 0</span></div><div class="mt"><span class="k1">– 6 –</span><span class="k2">– 12 –</span></div></div></div>
        <div class="ch d-flex flex-column"><div class="top"></div><div class="low d-flex"><div class="fz"><span class="l3">— 0</span></div><div class="mt"><span class="k1">– 6 –</span><span class="k2">– 12 –</span></div></div></div>
        <div class="ch d-flex flex-column"><div class="top"></div><div class="low d-flex"><div class="fz"><span class="l3">- 0</span><i class="fader f-r fa5"></i></div><div class="mt"><span class="k1">– 6 –</span><span class="k2">– 12 –</span></div></div></div>
      </section>
    </div>
  </div>
</div>

<!-- Listen-Editor window -->
<div class="win">
  <div class="wt d-flex align-items-center justify-content-center">
    <div class="wic"><svg width="23" height="27"><use href="#cube"/></svg></div>
    <span>Listen-Editor: DrumKick</span>
    <svg class="wbtn wb-min" width="12" height="14"><path d="M1 7h10" stroke="#ccc"/></svg>
    <svg class="wbtn wb-max" width="12" height="14"><path d="M1 1h10v12H1z" fill="none" stroke="#ccc"/></svg>
    <svg class="wbtn wb-cls" width="12" height="14"><path d="M1 1l10 12M11 1 1 13" stroke="#ccc"/></svg>
  </div>
  <div class="tb d-flex">
    <div class="sg gy w50 d-flex align-items-center justify-content-around px-1"><svg width="16" height="16"><circle cx="8" cy="8" r="7" fill="#fff"/><text x="8" y="12" text-anchor="middle" font-size="11" font-weight="700" fill="#55585c" font-family="Liberation Sans">S</text></svg><svg width="11" height="11"><circle cx="5.500" cy="5.500" r="5.500" fill="#fff"/></svg></div>
    <div class="sg gy w25 m6 d-flex align-items-center justify-content-center"><svg width="14" height="14"><circle cx="8" cy="7" r="6" fill="#8a8d90"/><circle cx="5" cy="7" r="4" fill="#5b5e62"/><circle cx="5" cy="7" r="2" fill="#8a8d90"/></svg></div>
    <div class="sg w51 m73 d-flex"><div class="cw cell d-flex align-items-center justify-content-center"><svg width="20" height="19"><path d="M5 1h9L10 5v12H9V5z" fill="#111"/><path d="M1 7h5v6H1zM13 7h2V5l4 5-4 5v-2h-2z" fill="#111"/></svg></div><div class="d-flex align-items-center justify-content-center flex-grow-1"><span class="tri"></span></div></div>
    <div class="sg w26 m5 cw d-flex align-items-center justify-content-center"><svg width="18" height="12"><path d="M0 4h1v4H0zM2.500 4h1v4h-1zM5 3.500h3L12 .5v11l-4-3H5zM14 3v6M16.500 3v6" fill="#111" stroke="#111" stroke-width=".6"/></svg></div>
    <div class="sg gy w153 m5 d-flex">
      <div class="cell d-flex align-items-center justify-content-center"><svg width="10" height="15"><path d="M1 0v12l3-3 2 5 2-1-2-4.500h4z" fill="#fff"/></svg></div>
      <div class="cell cw d-flex align-items-center justify-content-center"><svg width="15" height="15"><path d="M12 1l2 2-9 9-3.500 1.500L3 10z" fill="#111"/></svg></div>
      <div class="cell d-flex align-items-center justify-content-center"><svg width="15" height="15"><path d="M9 1l5 4-4 4.500-5-4z" fill="#fff"/><path d="M5 5.500l5 4-3 3.500H4.500L2 9z" fill="none" stroke="#fff" stroke-width="1.200"/></svg></div>
      <div class="cell d-flex align-items-center justify-content-center"><svg width="16" height="16"><path d="M12 1l2.500 2.500-9.500 9.500L1 15l2-4z" fill="none" stroke="#ddd" stroke-width="1.300"/></svg></div>
      <div class="cell d-flex align-items-center justify-content-center"><svg width="14" height="14"><path d="M1 1l12 12M13 1 1 13" stroke="#fff" stroke-width="2.400"/></svg></div>
      <div class="cell d-flex align-items-center justify-content-center"><svg width="15" height="15"><circle cx="6" cy="6" r="4.500" fill="none" stroke="#fff" stroke-width="1.800"/><path d="M9.500 9.500 14 14M6 3.500v5M3.500 6h5" stroke="#fff" stroke-width="1.800"/></svg></div>
    </div>
    <div class="sg w151 m5 d-flex align-items-center"><svg class="sy-i" width="13" height="14" viewBox="0 0 15 14"><path d="M2 0h10L7 5z" fill="#ddd"/><path d="M0 9h6v4H0zM9 9h6v4H9z" fill="#ddd"/></svg><span class="sy-t">SysEx</span><span class="tri ms-auto me-2"></span></div>
    <div class="sg w101 m7 d-flex align-items-center"><svg class="ms-2" width="13" height="14"><path d="M2 0v6M0 4l2 3 2-3" fill="none" stroke="#ddd" stroke-width="1.400"/><ellipse cx="8" cy="12" rx="2.500" ry="1.800" fill="#ddd"/><path d="M10 12V2" stroke="#ddd"/></svg><span class="ms-2">100</span><svg class="ms-2" width="9" height="16"><path d="M4.500 1 9 6.500H0zM4.500 15 0 9.500h9z" fill="#ddd"/></svg><div class="ms-2 d-flex align-items-center justify-content-center flex-grow-1 border-start border-secondary"><span class="tri"></span></div></div>
    <div class="sg w166 m5 d-flex"><div class="cw cell d-flex align-items-center justify-content-center"><svg width="15" height="15"><path d="M7.500 0v5M7.500 10v5M0 3l5 4.500L0 12M15 3l-5 4.500 5 4.500" fill="none" stroke="#111" stroke-width="2.200"/></svg></div><div class="d-flex align-items-center flex-grow-1 pe-2"><span class="lbl">Raster</span><span class="tri ms-auto"></span></div><div class="cell border-start border-secondary d-flex align-items-center justify-content-center"><svg width="16" height="12"><path d="M0 6h5M8 0v12M11 6h5M13.500 3.500v5" stroke="#eee" stroke-width="1.600"/></svg></div></div>
    <div class="sg w204 m5 d-flex"><div class="cell cg d-flex align-items-center justify-content-center"><svg width="15" height="15"><circle cx="7" cy="7" r="5.500" fill="none" stroke="#ddd" stroke-width="1.800"/><path d="M9 9l5 5" stroke="#ddd" stroke-width="1.800"/></svg></div><div class="d-flex align-items-center flex-grow-1 pe-2"><span class="lbl">1/16</span><span class="tri ms-auto"></span></div><div class="cg w52 d-flex align-items-center justify-content-around"><svg width="14" height="14"><path d="M1 2h4l-2 3M13 1 2 13M9 9l4 4" fill="none" stroke="#ddd" stroke-width="1.400"/></svg><svg width="14" height="14"><use href="#e"/></svg></div></div>
    <div class="sg w76 m5 d-flex"><div class="cw cell d-flex align-items-center justify-content-center"><svg width="15" height="15"><path d="M1 1h13M1 1v13M14 1v13" fill="none" stroke="#111" stroke-width="1.200"/><path d="M3 2h3v5H3zM9 2h3v5H9z" fill="#111"/></svg></div><div class="d-flex align-items-center justify-content-center flex-grow-1"><svg width="16" height="13"><path d="M3 0h13l-2 3H1zM3 5h13l-2 3H1zM3 10h13l-2 3H1z" fill="#eee"/></svg></div><div class="d-flex align-items-center pe-2"><span class="tri"></span></div></div>
    <div class="sg w126 m11 d-flex align-items-center"><span class="lbl">DrumKick</span><span class="tri ms-auto me-2"></span></div>
    <div class="sg w134 m6 d-flex align-items-center"><svg class="ms-1" width="16" height="18"><path d="M7 0a7.500 7 0 0 1 7 7 8 8 0 0 1-5 7l-2 3c-1 0-1-1-1-3l2-3c2-1 1-4-1-4-3 0-3 3-5 2A7 7 0 0 1 7 0z" fill="#fff"/></svg><span class="ms-1 text-nowrap">Anschlagstärk.</span><span class="tri ms-auto me-1"></span></div>
    <div class="sg gy w26 m5 d-flex align-items-center justify-content-center"><svg width="18" height="14"><path d="M3 0h2v14H3zM7 0h2v14H7zM11 0h2v14h-2zM15 0h2v14h-2zM0 4l2 2-2 2z" fill="#9a9da0"/></svg></div>
    <div class="sg w77 m64 d-flex"><div class="cw cell d-flex align-items-center justify-content-center"><svg width="13" height="15"><path d="M1 1h11v13H1z" fill="none" stroke="#111" stroke-width="1.400"/><path d="M1 1h3v13H1z" fill="#111"/></svg></div><div class="cw cell d-flex align-items-center justify-content-center"><svg width="13" height="15"><path d="M1 1h11v13H1z" fill="none" stroke="#111" stroke-width="1.400"/><path d="M9 1h3v13H9z" fill="#111"/></svg></div><div class="d-flex align-items-center justify-content-center flex-grow-1"><svg width="16" height="15"><path d="M6 1H1v13h5" fill="none" stroke="#eee" stroke-width="1.300"/><g transform="translate(4 1) scale(.75)"><use href="#gear" width="16" height="16"/></g></svg></div></div>
    <div class="sg w20 m5 d-flex align-items-center justify-content-center"><svg width="14" height="14"><use href="#gear"/></svg></div>
  </div>
  <div class="fokrow d-flex align-items-center">
    <span class="fok">Fokus</span>
    <div class="fdd d-flex align-items-center justify-content-end">Kein Fokus<span class="tri"></span></div>
    <button type="button" class="btn alle">Alle einblenden</button>
    <div class="cks">
      <label class="d-flex align-items-center"><input class="form-check-input ck" type="checkbox">Note</label>
      <label class="d-flex align-items-center"><input class="form-check-input ck" type="checkbox">Controller</label>
      <label class="d-flex align-items-center"><input class="form-check-input ck" type="checkbox">Pitchbend</label>
      <label class="d-flex align-items-center"><input class="form-check-input ck" type="checkbox">Program Change</label>
      <label class="d-flex align-items-center"><input class="form-check-input ck" type="checkbox">Aftertouch</label>
      <label class="d-flex align-items-center"><input class="form-check-input ck" type="checkbox">Poly Pressure</label>
      <label class="d-flex align-items-center"><input class="form-check-input ck" type="checkbox">System Exclusive</label>
      <label class="d-flex align-items-center"><input class="form-check-input ck" type="checkbox">SMF</label>
      <label class="d-flex align-items-center"><input class="form-check-input ck" type="checkbox">Notation</label>
    </div>
  </div>
  <div class="blk"></div>
  <div class="wbody d-flex">
    <div class="pnl left">
      <div class="xp d-flex align-items-center"><span class="tr"></span>Transponieren<em>T</em></div>
      <div class="xp d-flex align-items-center"><span class="tr"></span>Länge<em>L</em></div>
      <div class="gbtn d-flex align-items-center justify-content-center"><svg width="13" height="13"><use href="#gear"/></svg></div>
    </div>
    <div class="pnl main">
      <div class="up d-flex">
        <div class="evw">
          <table class="table evt">
            <colgroup><col><col><col><col><col><col><col><col><col><col><col></colgroup>
            <thead><tr><th>&gt;</th><th>Typ</th><th>Anfang</th><th>Ende</th><th>Länge</th><th>Wert 1</th><th>Wert 2</th><th>Wert 3</th><th>Kanal</th><th class="kom" colspan="2">Kommentar</th></tr></thead>
            <tbody>
              <tr class="s"><td></td><td>SysEx</td><td class="r">1.  1.  1.   0</td><td></td><td></td><td></td><td></td><td></td><td></td><td class="kt">F0,43,10,24,04,01,F7</td><td></td></tr>
              <tr><td></td><td>Note<svg class="nt" width="8" height="14"><use href="#nt"/></svg></td><td class="r">6.  1.  1.   0</td><td class="r">6.  1.  3.   0</td><td class="r">0.  0.  2.   0</td><td class="r">C1</td><td class="r">127</td><td class="r">100</td><td class="r">1</td><td></td><td></td></tr>
              <tr><td></td><td>Note<svg class="nt" width="8" height="14"><use href="#nt"/></svg></td><td class="r">6.  2.  1.   0</td><td class="r">6.  2.  3.   0</td><td class="r">0.  0.  2.   0</td><td class="r">C1</td><td class="r">127</td><td class="r">100</td><td class="r">1</td><td></td><td></td></tr>
              <tr><td></td><td>Note<svg class="nt" width="8" height="14"><use href="#nt"/></svg></td><td class="r">6.  3.  1.   0</td><td class="r">6.  3.  3.   0</td><td class="r">0.  0.  2.   0</td><td class="r">C1</td><td class="r">127</td><td class="r">100</td><td class="r">1</td><td></td><td></td></tr>
              <tr><td></td><td>Note<svg class="nt" width="8" height="14"><use href="#nt"/></svg></td><td class="r">6.  4.  1.   0</td><td class="r">6.  4.  3.   0</td><td class="r">0.  0.  2.   0</td><td class="r">C1</td><td class="r">127</td><td class="r">100</td><td class="r">1</td><td></td><td></td></tr>
              <tr><td></td><td>Note<svg class="nt" width="8" height="14"><use href="#nt"/></svg></td><td class="r">7.  1.  1.   0</td><td class="r">7.  1.  3.   0</td><td class="r">0.  0.  2.   0</td><td class="r">C1</td><td class="r">127</td><td class="r">100</td><td class="r">1</td><td></td><td></td></tr>
              <tr><td></td><td>Note<svg class="nt" width="8" height="14"><use href="#nt"/></svg></td><td class="r">7.  2.  1.   0</td><td class="r">7.  2.  3.   0</td><td class="r">0.  0.  2.   0</td><td class="r">C1</td><td class="r">127</td><td class="r">100</td><td class="r">1</td><td></td><td></td></tr>
              <tr><td></td><td>Note<svg class="nt" width="8" height="14"><use href="#nt"/></svg></td><td class="r">7.  3.  1.   0</td><td class="r">7.  3.  3.   0</td><td class="r">0.  0.  2.   0</td><td class="r">C1</td><td class="r">127</td><td class="r">100</td><td class="r">1</td><td></td><td></td></tr>
              <tr><td></td><td>Note<svg class="nt" width="8" height="14"><use href="#nt"/></svg></td><td class="r">7.  4.  1.   0</td><td class="r">7.  4.  3.   0</td><td class="r">0.  0.  2.   0</td><td class="r">C1</td><td class="r">127</td><td class="r">100</td><td class="r">1</td><td></td><td></td></tr>
              <tr class="fill"><td></td><td></td><td></td><td></td><td></td><td></td><td></td><td></td><td></td><td></td><td></td></tr>
            </tbody>
          </table>
        </div>
        <div class="divi"></div>
        <div class="nd"><div class="nd-r"><b>1</b></div><div class="nd-b"><span class="pink"></span></div></div>
        <div class="vs"><div class="tg4 d-flex align-items-center justify-content-center"><span class="tri"></span></div><div class="ar d-flex align-items-center justify-content-center"><svg width="7" height="5"><path d="M.5 4.500l3-3 3 3" fill="none" stroke="#ccc"/></svg></div><div class="th"></div><div class="bt d-flex align-items-center justify-content-center"><svg width="7" height="5"><path d="M.5.500l3 3 3-3" fill="none" stroke="#ccc"/></svg></div></div>
        <div class="wert"><div class="hd">Wert</div><div class="wb"></div><div class="wb"></div><div class="wb"></div><div class="wb"></div><div class="wb"></div><div class="wb"></div><div class="wb"></div><div class="wb"></div></div>
      </div>
      <div class="bots d-flex">
        <div class="hs hs1 d-flex align-items-center position-relative"><u class="position-absolute start-0 ms-1">‹</u><i></i><u class="position-absolute end-0 me-1">›</u></div>
        <div class="hs hs2 d-flex align-items-center position-relative"><u class="position-absolute start-0 ms-1">‹</u><i></i><u class="position-absolute end-0 me-1">›</u></div>
        <div class="zm d-flex"><span>-</span><hr class="align-self-center"><em></em><hr class="align-self-center"><span>+</span></div>
      </div>
    </div>
  </div>
</div>

<div class="rbox"></div>

<!-- MIDI-SysEx-Editor window -->
<div class="sx">
  <div class="sxt d-flex align-items-center"><div class="sxic"><svg width="16" height="17" viewBox="0 0 23 27"><use href="#cube"/></svg></div><span>MIDI-SysEx-Editor</span><svg class="ms-auto me-2" width="12" height="12"><path d="M1 1l10 10M11 1 1 11" stroke="#333"/></svg></div>
  <div class="sxb d-flex">
    <div class="d-flex">
      <table class="table sxtb align-self-start">
        <colgroup><col><col><col><col><col><col><col><col><col><col><col></colgroup>
        <thead><tr><th>Adresse</th><th>0</th><th>1</th><th>2</th><th>3</th><th>4</th><th>5</th><th>6</th><th>7</th><th>ASCII</th><th></th></tr></thead>
        <tbody><tr><td class="d c">000000</td><td class="d c">F0</td><td class="c">43</td><td class="c">10</td><td class="c">24</td><td class="c">04</td><td class="c">01</td><td class="d c">F7</td><td></td><td class="d c">ðC $&nbsp; ÷</td><td></td></tr></tbody>
      </table>
      <div class="sbar d-flex flex-column justify-content-between"><div class="d-flex align-items-center justify-content-center"><svg width="9" height="6"><path d="M1 5l3.500-3.500L8 5" fill="none" stroke="currentColor" stroke-width="1.500"/></svg></div><div class="d-flex align-items-center justify-content-center"><svg width="9" height="6"><path d="M1 1l3.500 3.500L8 1" fill="none" stroke="currentColor" stroke-width="1.500"/></svg></div></div>
    </div>
    <div class="sep"></div>
    <div class="sxr">
      <button type="button" class="btn sb">Importieren...</button>
      <button type="button" class="btn sb sp21">Exportieren...</button>
      <button type="button" class="btn sb">Einfügen</button>
      <button type="button" class="btn sb sp21">Löschen</button>
      <div class="fr d-flex align-items-center">Binär<input class="form-control" value="00000000"></div>
      <div class="fr d-flex align-items-center">Dezimal<input class="form-control" value="0"></div>
      <div class="fr fr-last d-flex align-items-center">ASCII<input class="form-control" value=""></div>
      <button type="button" class="btn sb">Abbrechen</button>
      <button type="button" class="btn sb">OK</button>
    </div>
  </div>
</div>

<svg class="arrow" width="70" height="86"><path d="M11.500 80 52 12" stroke="#e01b24" stroke-width="3.500"/><path d="M58 6 61 26 40 15z" fill="#e01b24"/></svg>
</body>
</html>
